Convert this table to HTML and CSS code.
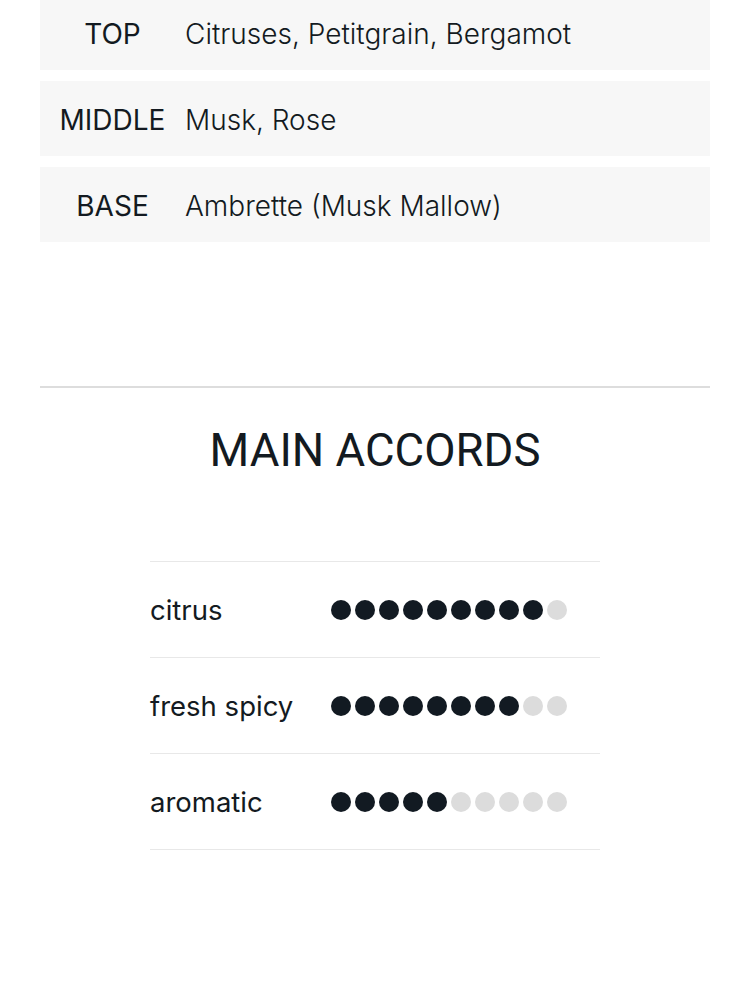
FILE: index.html
```html
<!DOCTYPE html>
<html lang="en">
<head>
<meta charset="utf-8">
<title>Notes and Accords</title>
<link rel="stylesheet" href="styles.css">
</head>
<body>
<section class="notes">
  <div class="note-row"><div class="note-label">TOP</div><div class="note-value">Citruses, Petitgrain, Bergamot</div></div>
  <div class="note-row"><div class="note-label">MIDDLE</div><div class="note-value">Musk, Rose</div></div>
  <div class="note-row"><div class="note-label">BASE</div><div class="note-value">Ambrette (Musk Mallow)</div></div>
</section>
<hr class="divider">
<h2 class="accords-title">MAIN ACCORDS</h2>
<section class="accords">
  <div class="accord-row">
    <div class="accord-name">citrus</div>
    <div class="dots"><span class="dot on"></span><span class="dot on"></span><span class="dot on"></span><span class="dot on"></span><span class="dot on"></span><span class="dot on"></span><span class="dot on"></span><span class="dot on"></span><span class="dot on"></span><span class="dot"></span></div>
  </div>
  <div class="accord-row">
    <div class="accord-name">fresh spicy</div>
    <div class="dots"><span class="dot on"></span><span class="dot on"></span><span class="dot on"></span><span class="dot on"></span><span class="dot on"></span><span class="dot on"></span><span class="dot on"></span><span class="dot on"></span><span class="dot"></span><span class="dot"></span></div>
  </div>
  <div class="accord-row">
    <div class="accord-name">aromatic</div>
    <div class="dots"><span class="dot on"></span><span class="dot on"></span><span class="dot on"></span><span class="dot on"></span><span class="dot on"></span><span class="dot"></span><span class="dot"></span><span class="dot"></span><span class="dot"></span><span class="dot"></span></div>
  </div>
</section>
</body>
</html>
```
FILE: styles.css
```css
html, body {
  margin: 0;
  padding: 0;
  background: #ffffff;
  color: #131a21;
}

body {
  font-family: Inter, "Noto Sans", sans-serif;
}

.notes {
  display: flex;
  flex-direction: column;
  gap: 11px;
  margin: -5px 40px 0;
}

.note-row {
  display: flex;
  align-items: center;
  height: 75px;
  padding-top: 2px;
  box-sizing: border-box;
  background: #f7f7f7;
  font-size: 28px;
}

.note-label {
  width: 145px;
  text-align: center;
  font-weight: 400;
}

.note-value {
  font-weight: 300;
}

.divider {
  margin: 144px 40px 0;
  border: 0;
  height: 2px;
  background: #dddddd;
}

.accords-title {
  margin: 40px 0 0;
  text-align: center;
  font-family: Roboto, "Liberation Sans", sans-serif;
  font-size: 45.5px;
  line-height: 46px;
  font-weight: 400;
}

.accords {
  width: 450px;
  margin: 87px auto 0;
}

.accord-row {
  display: flex;
  align-items: center;
  height: 95px;
  border-top: 1px solid #e8e8e8;
}

.accord-row:last-child {
  border-bottom: 1px solid #e8e8e8;
}

.accord-name {
  width: 181px;
  font-size: 27.5px;
  font-weight: 400;
}

.dots {
  display: flex;
  gap: 4px;
}

.dot {
  width: 20px;
  height: 20px;
  border-radius: 50%;
  background: #dcdcdc;
}

.dot.on {
  background: #121a22;
}
```
